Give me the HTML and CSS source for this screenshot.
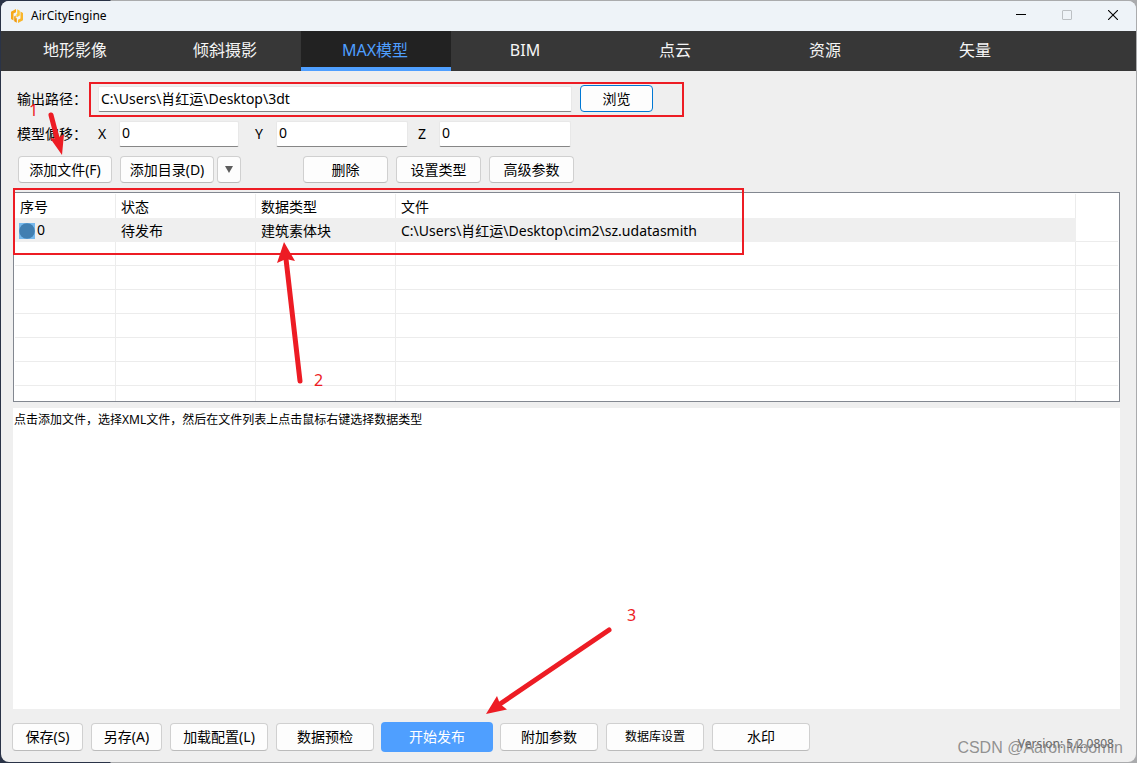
FILE: index.html
```html
<!DOCTYPE html>
<html lang="zh-CN">
<head>
<meta charset="utf-8">
<title>AirCityEngine</title>
<link rel="stylesheet" href="styles.css">
</head>
<body>
<div class="window">
  <header class="titlebar">
    <svg class="logo" viewBox="0 0 14 16" width="14" height="16" aria-hidden="true">
      <path d="M6 1 1 3.800v7.200l2.500 1.600V5.600L6 4.200z" fill="#f7a818"/>
      <path d="M8 15l5-2.800V5l-2.500-1.600v7L8 11.800z" fill="#f9b62c"/>
      <path d="M7.200 1.200l2.600 1.500v4.700L6.400 9.500V6.300l.8-.5z" fill="#ffc637"/>
      <path d="M6.800 14.800l-2.600-1.500V8.600l1.500-1v2.900l1.100-.6z" fill="#f09a10"/>
    </svg>
    <h1 class="title">AirCityEngine</h1>
    <div class="controls">
      <button class="control" aria-label="最小化"><svg width="10" height="10" viewBox="0 0 10 10"><path d="M0 4.500h10" stroke="#000"/></svg></button>
      <button class="control" aria-label="最大化" disabled><svg width="10" height="10" viewBox="0 0 10 10"><rect x=".5" y=".5" width="9" height="9" rx=".5" fill="none" stroke="#bcc0c4"/></svg></button>
      <button class="control" aria-label="关闭"><svg width="10" height="10" viewBox="0 0 10 10"><path d="M0 0l10 10M10 0L0 10" stroke="#000" stroke-width="1.1"/></svg></button>
    </div>
  </header>
  <nav class="tabs">
    <button class="tab">地形影像</button>
    <button class="tab">倾斜摄影</button>
    <button class="tab tab-active">MAX模型</button>
    <button class="tab">BIM</button>
    <button class="tab">点云</button>
    <button class="tab">资源</button>
    <button class="tab">矢量</button>
  </nav>
  <main class="content">
    <div class="form">
      <div class="row">
        <label class="row-label" for="path">输出路径：</label>
        <input class="field field-path" id="path" value="C:\Users\肖红运\Desktop\3dt">
        <button class="btn btn-browse">浏览</button>
      </div>
      <div class="row">
        <span class="row-label">模型偏移：</span>
        <label class="axis" for="x">X</label><input class="field field-x" id="x" value="0">
        <label class="axis axis-next" for="y">Y</label><input class="field field-y" id="y" value="0">
        <label class="axis axis-last" for="z">Z</label><input class="field field-y" id="z" value="0">
      </div>
      <div class="row row-actions">
        <button class="btn btn-add">添加文件(F)</button>
        <div class="split">
          <button class="btn btn-add">添加目录(D)</button>
          <button class="btn btn-drop" aria-label="更多目录选项"><svg width="8" height="7" viewBox="0 0 8 7"><path d="M0 0h8L4 7z" fill="#5d5d5d"/></svg></button>
        </div>
        <div class="actions-right">
          <button class="btn btn-edit">删除</button>
          <button class="btn btn-edit">设置类型</button>
          <button class="btn btn-edit">高级参数</button>
        </div>
      </div>
    </div>
    <div class="list">
      <table class="grid">
        <colgroup><col class="col-no"><col class="col-mid"><col class="col-mid"><col class="col-file"><col></colgroup>
        <thead>
          <tr><th>序号</th><th>状态</th><th>数据类型</th><th>文件</th><th></th></tr>
        </thead>
        <tbody>
          <tr class="selected">
            <td class="cell-no"><svg class="dot" width="16" height="16" viewBox="0 0 16 16"><path fill="#76b9ed" d="M0 0h16v16H0z"/><circle cx="8" cy="8" r="7.8" fill="#417fb1"/></svg>0</td>
            <td>待发布</td><td>建筑素体块</td><td>C:\Users\肖红运\Desktop\cim2\sz.udatasmith</td><td></td>
          </tr>
          <tr><td></td><td></td><td></td><td></td><td></td></tr>
          <tr><td></td><td></td><td></td><td></td><td></td></tr>
          <tr><td></td><td></td><td></td><td></td><td></td></tr>
          <tr><td></td><td></td><td></td><td></td><td></td></tr>
          <tr><td></td><td></td><td></td><td></td><td></td></tr>
          <tr><td></td><td></td><td></td><td></td><td></td></tr>
          <tr><td></td><td></td><td></td><td></td><td></td></tr>
        </tbody>
      </table>
    </div>
    <textarea class="log" readonly aria-label="提示">点击添加文件，选择XML文件，然后在文件列表上点击鼠标右键选择数据类型</textarea>
  </main>
  <footer class="footer">
    <button class="btn btn-save">保存(S)</button>
    <button class="btn btn-save">另存(A)</button>
    <button class="btn btn-foot">加载配置(L)</button>
    <button class="btn btn-foot">数据预检</button>
    <button class="btn btn-start">开始发布</button>
    <button class="btn btn-foot">附加参数</button>
    <button class="btn btn-foot btn-small">数据库设置</button>
    <button class="btn btn-foot">水印</button>
    <span class="version">Version: 5.2.0808</span>
  </footer>
</div>
<svg class="marks" width="1137" height="763" viewBox="0 0 1137 763" aria-hidden="true">
  <g fill="none" stroke="#ed1c24" stroke-width="2">
    <path d="M90 83h593v33H90z"/>
    <path d="M14 189h729v65H14z"/>
  </g>
  <g stroke="#ed1c24" stroke-width="5" stroke-linecap="round">
    <path d="M51 115l6 23"/>
    <path d="M300 381l-14-122"/>
    <path d="M609 630L500 704"/>
  </g>
  <g fill="#ed1c24">
    <path d="M62 155l-12-17 7 1 7-5z"/>
    <path d="M284 242l11 19-9-2-9 4z"/>
    <path d="M486 714l11-18 3 8 7 5.500z"/>
  </g>
</svg>
<span class="mark mark-one">1</span>
<span class="mark mark-two">2</span>
<span class="mark mark-three">3</span>
<span class="watermark">CSDN @AaronMoomin</span>
</body>
</html>
```

FILE: styles.css
```css
* {
  box-sizing: border-box;
}

body {
  margin: 0;
  height: 100vh;
  padding: 1px;
  position: relative;
  overflow: hidden;
  background: linear-gradient(90deg, #2a3347 0, #2a3347 110px, #aaabad 111px);
  color: #000;
  font: 14px/20px "Noto Sans", "Noto Sans CJK SC", sans-serif;
}

button,
input,
textarea {
  font: inherit;
  color: inherit;
  margin: 0;
}

.window {
  height: 100%;
  display: flex;
  flex-direction: column;
  overflow: hidden;
  border-radius: 8px;
  background: #efefef;
}

.titlebar {
  display: flex;
  align-items: center;
  height: 30px;
  padding-left: 9px;
  background: #eef3f8;
}

.title {
  margin: 0 0 0 7px;
  font-size: 12px;
  font-weight: 400;
}

.controls {
  display: flex;
  height: 28px;
  align-self: flex-start;
  margin-left: auto;
}

.control {
  display: flex;
  align-items: center;
  justify-content: center;
  width: 46px;
  padding: 0;
  border: 0;
  background: none;
}

.tabs {
  display: flex;
  height: 40px;
  background: #373737;
}

.tab {
  width: 150px;
  padding: 0 2px 0 0;
  border: 0;
  border-top: 2px solid transparent;
  border-bottom: 4px solid transparent;
  background: none;
  color: #f5f5f5;
  font-size: 16px;
}

.tab-active {
  border-top-color: #222;
  border-bottom-color: #4f9fff;
  background: #222;
  color: #4f9fff;
}

.content {
  flex: 1;
  display: flex;
  flex-direction: column;
  min-height: 0;
  padding: 14px 16px 0 12px;
}

.form {
  display: flex;
  flex-direction: column;
  gap: 8px;
}

.row {
  display: flex;
  align-items: center;
  height: 27px;
  padding-left: 4px;
}

.row-label {
  width: 81px;
  white-space: nowrap;
}

.field {
  height: 26px;
  padding: 0 2px 2px;
  border: 1px solid #e8e8e8;
  border-bottom-color: #868686;
  border-radius: 2px;
  background: #fff;
}

.field-path {
  width: 474px;
  margin-right: 8px;
}

.field-x {
  width: 120px;
}

.field-y {
  width: 132px;
}

.axis {
  width: 21px;
}

.axis-next {
  margin-left: 16px;
}

.axis-last {
  margin-left: 10px;
}

.btn {
  height: 27px;
  padding: 0;
  border: 1px solid #d0d0d0;
  border-bottom-color: #bbb;
  border-radius: 4px;
  background: #fdfdfd;
  text-align: center;
  white-space: nowrap;
}

.btn-browse {
  width: 73px;
  border-color: #0078d4;
}

.row-actions {
  gap: 8px;
  margin-top: 1px;
  padding-left: 5px;
}

.split {
  display: flex;
  gap: 3px;
}

.btn-add {
  width: 94px;
}

.btn-drop {
  width: 24px;
}

.btn-drop svg {
  display: block;
  margin: 0 auto;
}

.actions-right {
  display: flex;
  gap: 8px;
  margin-left: 54px;
}

.btn-edit {
  width: 85px;
}

.list {
  height: 210px;
  flex: none;
  margin-top: 9px;
  padding: 1px;
  overflow: hidden;
  border: 1px solid #828790;
  background: #fff;
}

.grid {
  width: 100%;
  table-layout: fixed;
  border-collapse: separate;
  border-spacing: 0;
}

.col-no {
  width: 101px;
}

.col-mid {
  width: 140px;
}

.col-file {
  width: 680px;
}

.grid th,
.grid td {
  height: 24px;
  padding: 0 5px;
  border-right: 1px solid #ececec;
  font-weight: 400;
  text-align: left;
  white-space: nowrap;
}

.grid th {
  padding-top: 2px;
}

.grid td {
  border-bottom: 1px solid #ececec;
}

.grid th:last-child,
.grid td:last-child {
  border-right: 0;
}

.grid .selected td {
  padding-top: 2px;
}

.grid .selected td:not(:last-child) {
  border-color: #efefef;
  background: #efefef;
}

.grid .selected .cell-no {
  padding: 0 0 0 4px;
  background: linear-gradient(90deg, #fff 20px, #efefef 20px);
}

.dot {
  margin-right: 2px;
  vertical-align: middle;
}

.log {
  display: block;
  flex: 1;
  width: 100%;
  margin-top: 6px;
  padding: 2px 1px;
  border: 0;
  resize: none;
  outline: 0;
  background: #fff;
  font-size: 12px;
}

.footer {
  display: flex;
  align-items: center;
  gap: 8px;
  height: 53px;
  padding: 2px 22px 0 11px;
}

.btn-save {
  width: 71px;
  height: 28px;
}

.btn-foot {
  width: 98px;
  height: 28px;
}

.btn-start {
  width: 112px;
  height: 30px;
  margin: 0 -1px;
  border: 0;
  background: #4f9fff;
  color: #fff;
}

.btn-small {
  font-size: 12px;
}

.version {
  margin: 14px 0 0 auto;
  color: #666;
  font-size: 12px;
}

.marks {
  position: absolute;
  top: 0;
  left: 0;
  pointer-events: none;
}

.mark {
  position: absolute;
  color: #ed1c24;
  font-size: 16px;
}

.mark-one {
  top: 100px;
  left: 29px;
}

.mark-two {
  top: 370px;
  left: 314px;
}

.mark-three {
  top: 605px;
  left: 627px;
}

.watermark {
  position: absolute;
  right: 14px;
  bottom: 5px;
  color: rgba(120, 120, 120, 0.8);
  font-size: 16px;
  font-family: "Liberation Sans", sans-serif;
}
```
